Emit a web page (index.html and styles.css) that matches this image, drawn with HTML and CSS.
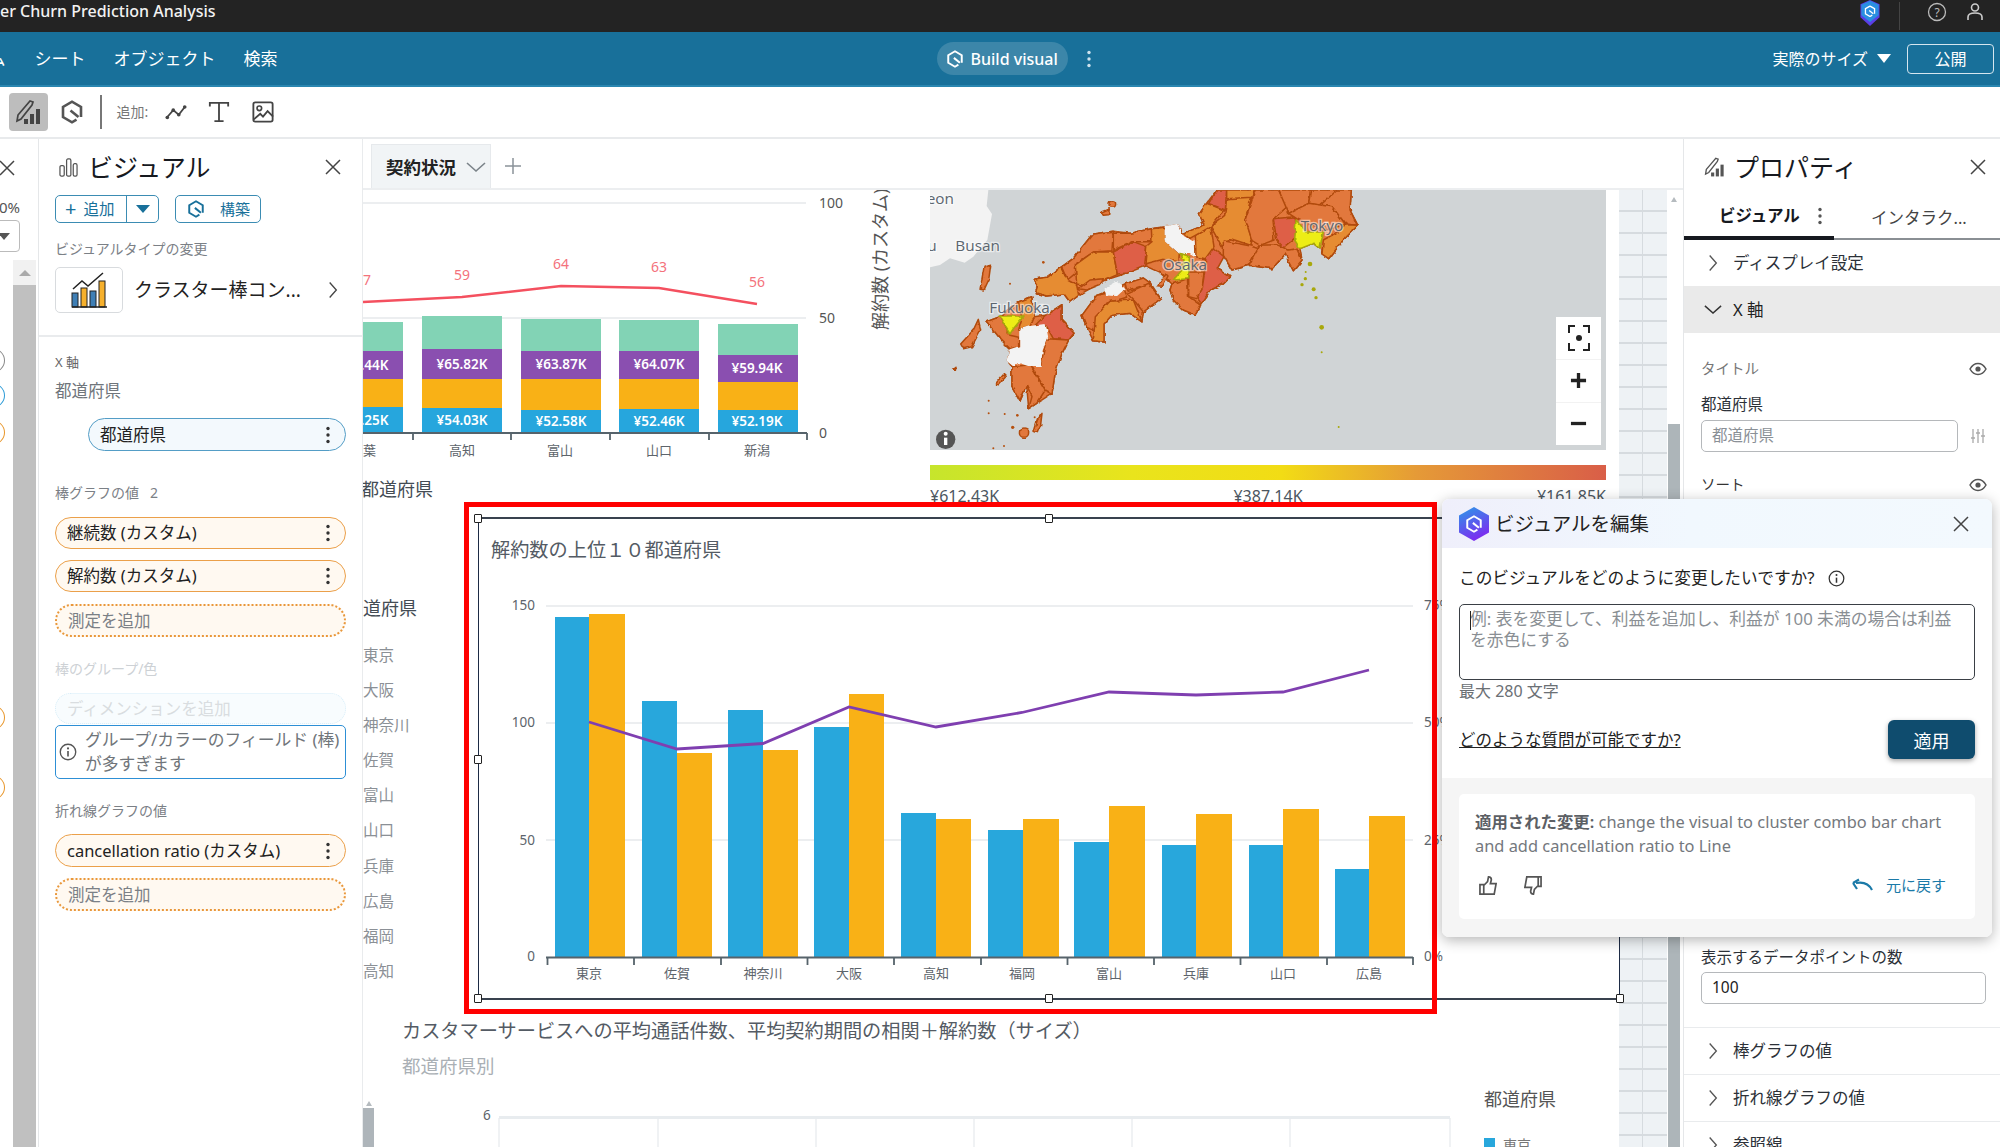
FILE: index.html
```html
<!DOCTYPE html>
<html lang="ja">
<head>
<meta charset="utf-8">
<title>Customer Churn Prediction Analysis</title>
<link rel="stylesheet" href="styles.css">
</head>
<body>
<svg class="defs" width="0" height="0" aria-hidden="true">
  <symbol id="q" viewBox="0 0 24 24"><path d="M16.5 19.6 12 22.3 3 17V7l9-5.3L21 7v10" fill="none" stroke="currentColor" stroke-width="2.6"/><path d="M10.5 10.5l8 6.5" fill="none" stroke="currentColor" stroke-width="2.6"/></symbol>
  <symbol id="x" viewBox="0 0 16 16"><path d="M1 1l14 14M15 1 1 15" fill="none" stroke="currentColor" stroke-width="1.5"/></symbol>
  <symbol id="chev-r" viewBox="0 0 12 20"><path d="M2 1l8 9-8 9" fill="none" stroke="currentColor" stroke-width="1.6"/></symbol>
  <symbol id="chev-d" viewBox="0 0 20 12"><path d="M1 2l9 8 9-8" fill="none" stroke="currentColor" stroke-width="1.6"/></symbol>
  <symbol id="dots" viewBox="0 0 4 18"><circle cx="2" cy="2.5" r="1.7"/><circle cx="2" cy="9" r="1.7"/><circle cx="2" cy="15.5" r="1.7"/></symbol>
  <symbol id="eye" viewBox="0 0 18 14"><path d="M1 7c2-3.6 5-5.5 8-5.5S15 3.400 17 7c-2 3.600-5 5.500-8 5.500S3 10.600 1 7z" fill="none" stroke="currentColor" stroke-width="1.5"/><circle cx="9" cy="7" r="2.600" fill="currentColor"/></symbol>
  <symbol id="pen" viewBox="0 0 28 28"><path d="M3 17 15 3l3 1-1 3L6 21l-4 2z" fill="none" stroke="currentColor" stroke-width="1.7"/><rect x="9" y="21" width="4" height="5" fill="currentColor"/><rect x="15" y="16" width="4" height="10" fill="currentColor"/><rect x="21" y="11" width="4" height="15" fill="currentColor"/></symbol>
  <symbol id="info" viewBox="0 0 20 20"><circle cx="10" cy="10" r="8.600" fill="none" stroke="currentColor" stroke-width="1.500"/><circle cx="10" cy="6" r="1.200" fill="currentColor"/><path d="M10 9v6" stroke="currentColor" stroke-width="1.800"/></symbol>
  <filter id="rough" x="-5%" y="-5%" width="110%" height="110%"><feTurbulence type="fractalNoise" baseFrequency="0.05" numOctaves="2" seed="4"/><feDisplacementMap in="SourceGraphic" scale="11" xChannelSelector="R" yChannelSelector="G"/></filter>
</svg>

<div class="app">
  <header class="topbar">
    <span class="doc-title">er Churn Prediction Analysis</span>
    <div class="top-right">
      <svg class="top-shield" viewBox="0 0 24 30"><path d="M12 0 23 5v15l-11 10L1 20V5z" fill="#5b3fe6"/><path d="M12 1 22 5.500v12l-10 8-10-8v-12z" fill="#2a8fe0"/><use href="#q" x="5" y="6" width="14" height="14" color="#fff"/></svg>
      <span class="top-sep"></span>
      <svg class="top-ico" viewBox="0 0 20 20"><circle cx="10" cy="10" r="8.500" fill="none" stroke="#bbb" stroke-width="1.300"/><text x="10" y="14.500" text-anchor="middle" class="qmark">?</text></svg>
      <svg class="top-ico user" viewBox="0 0 20 20"><circle cx="10" cy="5.500" r="3.500" fill="none" stroke="#ccc" stroke-width="1.600"/><path d="M3 18v-3c0-2 2-4 7-4s7 2 7 4v3" fill="none" stroke="#ccc" stroke-width="1.600"/></svg>
    </div>
  </header>

  <nav class="nav">
    <div class="nav-left"><span class="nav-clip">ホーム</span><span class="nav-first">シート</span><span>オブジェクト</span><span>検索</span></div>
    <div class="build"><svg class="ic18"><use href="#q"/></svg>Build visual</div>
    <svg class="nav-dots"><use href="#dots"/></svg>
    <div class="nav-right"><span>実際のサイズ</span><i class="nav-caret"></i><span class="publish">公開</span></div>
  </nav>

  <div class="toolbar">
    <div class="tool-active"><svg class="ic28"><use href="#pen"/></svg></div>
    <svg class="tool-hex"><use href="#q"/></svg>
    <span class="tool-sep"></span>
    <span class="tool-label">追加:</span>
    <svg class="tool-ic first" viewBox="0 0 24 24"><path d="M2 18l7-8 6 5 7-9" fill="none" stroke="#444" stroke-width="2"/><circle cx="2.500" cy="18" r="2" fill="#444"/><circle cx="9" cy="10" r="2" fill="#444"/><circle cx="15" cy="15" r="2" fill="#444"/><circle cx="21.500" cy="6.500" r="2" fill="#444"/></svg>
    <svg class="tool-ic second" viewBox="0 0 24 24"><path d="M2 6V2h20v4M12 2v20M7 22h10" fill="none" stroke="#444" stroke-width="2"/></svg>
    <svg class="tool-ic third" viewBox="0 0 24 24"><rect x="1.500" y="1.500" width="21" height="21" rx="2" fill="none" stroke="#444" stroke-width="2"/><circle cx="8" cy="8" r="2.500" fill="none" stroke="#444" stroke-width="1.800"/><path d="M2 20 9 14l3 3 5-6 6 6" fill="none" stroke="#444" stroke-width="2"/></svg>
  </div>

  <main class="main">
    <aside class="rail">
      <div class="rail-top">
        <svg class="rail-x"><use href="#x"/></svg>
        <div class="rail-pct">100%</div>
        <div class="rail-select"><i></i></div>
      </div>
      <div class="rail-body">
        <div class="rail-arcs">
          <span class="arc arc-gray"></span>
          <span class="arc arc-blue"></span>
          <span class="arc arc-orange"></span>
          <span class="arc arc-orange arc-far"></span>
          <span class="arc arc-orange arc-far2"></span>
        </div>
        <div class="rail-scroll"><div class="rail-arrow"><i></i></div><div class="rail-thumb"></div></div>
      </div>
    </aside>

    <section class="visual-panel">
      <div class="vp-top">
        <div class="panel-head">
          <svg class="head-ic" viewBox="0 0 20 20"><rect x="1" y="8" width="4.500" height="11" rx="1.500" fill="none" stroke="#555" stroke-width="1.300"/><rect x="8" y="1" width="4.500" height="18" rx="1.500" fill="none" stroke="#555" stroke-width="1.300"/><rect x="15" y="6" width="4" height="13" rx="1.500" fill="none" stroke="#555" stroke-width="1.300"/></svg>
          <h2 class="panel-title">ビジュアル</h2>
          <svg class="panel-close"><use href="#x"/></svg>
        </div>
        <div class="btn-row">
          <div class="btn-add"><span class="btn-add-main"><b class="plus">+</b>追加</span><span class="btn-add-drop"><i></i></span></div>
          <div class="btn-build"><svg class="ic18"><use href="#q"/></svg><span>構築</span></div>
        </div>
        <div class="field-label change-label">ビジュアルタイプの変更</div>
        <div class="type-row">
          <div class="type-box">
            <svg viewBox="0 0 36 36" class="type-ic">
              <rect x="1" y="21" width="6" height="14" fill="#3f7fb5" stroke="#222"/><rect x="10" y="16" width="6" height="19" fill="#f6b02c" stroke="#222"/><rect x="19" y="19" width="6" height="16" fill="#3f7fb5" stroke="#222"/><rect x="28" y="9" width="6" height="26" fill="#f6b02c" stroke="#222"/>
              <path d="M1 35h35M2 17l9-8 6 5 15-13" fill="none" stroke="#222" stroke-width="1.500"/>
            </svg>
          </div>
          <span class="type-name">クラスター棒コン...</span>
          <svg class="type-chev"><use href="#chev-r"/></svg>
        </div>
      </div>
      <div class="wells">
        <div class="field-label x-label">X 軸</div>
        <div class="well-name">都道府県</div>
        <div class="pill pill-blue"><span>都道府県</span><svg class="pill-dots"><use href="#dots"/></svg></div>

        <div class="field-label sect-1">棒グラフの値&nbsp;&nbsp;&nbsp;2</div>
        <div class="pill pill-orange p1"><span>継続数 (カスタム)</span><svg class="pill-dots"><use href="#dots"/></svg></div>
        <div class="pill pill-orange p2"><span>解約数 (カスタム)</span><svg class="pill-dots"><use href="#dots"/></svg></div>
        <div class="pill pill-add p3">測定を追加</div>

        <div class="field-label muted sect-2">棒のグループ/色</div>
        <div class="pill pill-dim">ディメンションを追加</div>
        <div class="warn"><svg class="warn-ic"><use href="#info"/></svg><span>グループ/カラーのフィールド (棒) が多すぎます</span></div>

        <div class="field-label sect-3">折れ線グラフの値</div>
        <div class="pill pill-orange p4"><span>cancellation ratio (カスタム)</span><svg class="pill-dots"><use href="#dots"/></svg></div>
        <div class="pill pill-add p5">測定を追加</div>
      </div>
    </section>

    <section class="canvas">
      <div class="tabs">
        <div class="tab">契約状況<svg class="tab-chev"><use href="#chev-d"/></svg></div>
        <svg class="tab-plus" viewBox="0 0 18 18"><path d="M9 1v16M1 9h16" stroke="#8a9299" stroke-width="1.500"/></svg>
      </div>

      <svg class="vis vis-top" viewBox="363 190 560 280">
        <g class="grid"><path d="M363 203H806M363 318H806"/></g>
        <g class="bars">
          <rect x="323" y="322" width="80" height="29" fill="#82d3b5"/><rect x="323" y="351" width="80" height="28" fill="#8a4fb0"/><rect x="323" y="379" width="80" height="28" fill="#f9b116"/><rect x="323" y="407" width="80" height="26" fill="#26a6dd"/>
          <rect x="422" y="316" width="80" height="33" fill="#82d3b5"/><rect x="422" y="349" width="80" height="30" fill="#8a4fb0"/><rect x="422" y="379" width="80" height="29" fill="#f9b116"/><rect x="422" y="408" width="80" height="25" fill="#26a6dd"/>
          <rect x="521" y="319" width="80" height="32" fill="#82d3b5"/><rect x="521" y="351" width="80" height="28" fill="#8a4fb0"/><rect x="521" y="379" width="80" height="31" fill="#f9b116"/><rect x="521" y="410" width="80" height="23" fill="#26a6dd"/>
          <rect x="619" y="320" width="80" height="31" fill="#82d3b5"/><rect x="619" y="351" width="80" height="28" fill="#8a4fb0"/><rect x="619" y="379" width="80" height="30" fill="#f9b116"/><rect x="619" y="409" width="80" height="24" fill="#26a6dd"/>
          <rect x="718" y="324" width="80" height="31" fill="#82d3b5"/><rect x="718" y="355" width="80" height="27" fill="#8a4fb0"/><rect x="718" y="382" width="80" height="28" fill="#f9b116"/><rect x="718" y="410" width="80" height="23" fill="#26a6dd"/>
        </g>
        <g class="bar-val">
          <text x="363" y="365">¥65.44K</text><text x="363" y="420">¥54.25K</text>
          <text x="462" y="364">¥65.82K</text><text x="462" y="420">¥54.03K</text>
          <text x="561" y="364">¥63.87K</text><text x="561" y="421">¥52.58K</text>
          <text x="659" y="364">¥64.07K</text><text x="659" y="421">¥52.46K</text>
          <text x="757" y="368">¥59.94K</text><text x="757" y="421">¥52.19K</text>
        </g>
        <polyline class="line-red" points="363,302 462,297 561,286 659,288 757,304"/>
        <g class="red-val"><text x="363" y="279">57</text><text x="462" y="274">59</text><text x="561" y="263">64</text><text x="659" y="266">63</text><text x="757" y="281">56</text></g>
        <path class="axis" d="M363 433H807M413 433v7M511 433v7M610 433v7M709 433v7M807 433v7"/>
        <g class="cat"><text x="363" y="450">千葉</text><text x="462" y="450">高知</text><text x="560" y="450">富山</text><text x="659" y="450">山口</text><text x="757" y="450">新潟</text></g>
        <g class="val-r"><text x="819" y="202">100</text><text x="819" y="317">50</text><text x="819" y="432">0</text></g>
        <text class="axis-title" transform="translate(887 330) rotate(-90)">解約数 (カスタム)</text>
      </svg>

      <div class="map-vis">
        <svg class="map" viewBox="0 0 2028 780">
          <rect width="2028" height="780" fill="#d0d4d6"/>
          <path class="korea" d="M0 0H175L170 48 186 72 172 150 130 200 104 218 60 205 30 225 0 232z"/>
          <g class="pref">
            <path class="o1" d="M310 268 352 262 392 232 430 205 488 132 550 124 600 130 664 116 706 110 740 104 760 130 822 106 808 72 830 40 860 0H1264L1260 60 1284 106 1240 150 1196 206 1176 192 1170 176 1150 160 1110 176 1116 210 1090 242 1076 216 1066 192 1026 236 956 226 906 240 880 196 862 236 902 260 880 282 842 300 812 342 794 374 760 360 730 330 720 300 726 282 690 248 640 225 590 250 520 272 446 316 420 336 402 312 350 318 316 308 322 290z"/>
            <path class="o1" d="M456 376 500 316 585 282 640 264 662 280 692 326 640 366 636 396 600 370 545 376 522 402 522 456 490 452 470 412z"/>
            <path class="o1" d="M168 396 210 380 265 336 305 320 312 380 346 376 396 344 396 390 432 430 416 450 396 490 376 546 366 610 320 640 296 656 290 586 270 634 246 592 246 530 232 512 240 476 214 450 190 420z"/>
            <path class="o2" d="M310 268 352 262 392 232 412 270 440 285 446 316 420 336 402 312 350 318 316 308 322 290z"/>
            <path class="o1" d="M395 232 430 205 488 132 550 124 546 182 490 186 440 220 436 250 412 270z"/>
            <path class="o2" d="M436 225 490 186 550 186 562 254 520 272 460 286 440 282z"/>
            <path class="o1" d="M550 130 600 130 665 116 666 155 610 155 550 182z"/>
            <path class="o3" d="M550 186 610 155 650 170 645 228 590 250 562 252z"/>
            <path class="o2" d="M664 116 706 112 706 150 748 190 746 215 700 208 645 222 650 168 666 155z"/>
            <path class="w" d="M706 110 740 104 760 140 796 160 796 200 780 190 750 190 706 150z"/>
            <path class="o1" d="M726 282 772 266 776 320 812 346 794 374 760 360 730 330 720 300z"/>
            <path class="o1" d="M776 246 822 246 816 300 800 326 776 320z"/>
            <path class="o3" d="M842 168 882 200 862 236 902 260 880 282 842 300 812 342 800 326 816 298 824 246 828 200z"/>
            <path class="o2" d="M796 136 842 110 852 170 826 206 798 200z"/>
            <path class="o2" d="M760 130 822 106 808 72 830 40 882 60 842 110 796 136 778 146z"/>
            <path class="o2" d="M890 22 965 20 946 84 966 150 962 166 902 146 876 170 842 110 884 76z"/>
            <path class="o3" d="M860 0H890L886 60 836 40z"/>
            <path class="o1" d="M880 152 962 168 986 176 956 226 906 240 880 196z"/>
            <path class="o1" d="M975 0H1046L1072 50 1026 90 1032 150 990 166 966 152 946 88z"/>
            <path class="o2" d="M890 0H975L965 22 890 26z"/>
            <path class="o1" d="M990 166 1040 164 1076 180 1100 176 1116 210 1090 242 1076 216 1066 192 1026 236 956 226z"/>
            <path class="o3" d="M1030 86 1096 80 1100 140 1060 172 1040 150z"/>
            <path class="o1" d="M1046 0H1142L1136 40 1076 70z"/>
            <path class="o1" d="M1142 0H1222L1206 30 1170 46 1136 40z"/>
            <path class="o1" d="M1222 0H1264L1260 60 1282 106 1246 102 1206 50 1170 46z"/>
            <path class="o1" d="M1076 70 1136 40 1206 50 1246 102 1180 122 1100 86z"/>
            <path class="o2" d="M1246 104 1284 106 1240 150 1196 206 1176 192 1180 150 1216 130z"/>
            <path class="o1" d="M585 282 640 264 662 280 590 302z"/>
            <path class="o1" d="M590 310 656 280 692 326 640 366 616 336z"/>
            <path class="o1" d="M456 376 500 316 580 300 590 322 530 340 510 380 490 420 470 412z"/>
            <path class="o2" d="M496 380 540 334 610 330 636 396 600 370 545 376 522 402 522 456 490 452z"/>
            <path class="o2" d="M265 336 305 320 312 380 300 410 266 420 276 386z"/>
            <path class="o3" d="M316 405 346 376 396 344 396 390 432 430 416 450 370 446 350 410z"/>
            <path class="o1" d="M350 446 416 450 396 490 376 546 366 610 346 600 300 520 332 524z"/>
            <path class="o1" d="M246 530 300 524 346 600 320 640 296 656 306 620 290 586 270 634 246 592z"/>
            <path class="o1" d="M168 396 210 380 240 436 266 442 266 470 240 476 214 450 190 420z"/>
            <path class="o1" d="M92 462 130 420 145 388 152 420 125 470 100 476z"/>
            <path class="o1" d="M150 298 162 232 182 226 176 270 162 300z"/>
            <path class="o1" d="M514 66 538 56 536 74 520 76z"/>
            <circle class="o1" cx="547" cy="42" r="10"/>
            <circle class="o1" cx="282" cy="728" r="14"/>
            <path class="o1" d="M312 724 322 690 336 670 332 704 322 728z"/>
            <path class="o1" d="M196 582 222 552 226 562 206 584z"/>
            <path class="o1" d="M68 540 78 532 76 542z"/>
            <path class="o1" d="M446 296 480 270 520 266 515 282 470 300z"/>
            <path class="o1" d="M682 290 708 252 714 258 696 292z"/>
            <path class="w" d="M526 296 560 278 582 296 560 316 530 314z"/>
            <path class="w" d="M270 420 300 410 345 404 352 440 336 480 330 526 295 526 265 516 250 526 232 512 240 480 270 470z"/>
            <path class="y" d="M208 378 282 378 250 416 240 432 226 410z"/>
            <path class="y" d="M750 190 778 200 776 266 730 270 756 240 762 210z"/>
            <path class="y" d="M1098 90 1130 126 1180 126 1170 176 1150 160 1110 176 1094 150z"/>
          </g>
          <g class="izu"><circle cx="1140" cy="222" r="7"/><circle cx="1127" cy="246" r="3"/><circle cx="1126" cy="266" r="5"/><circle cx="1116" cy="284" r="5"/><circle cx="1151" cy="298" r="6"/><circle cx="1158" cy="323" r="5"/><circle cx="1175" cy="412" r="7"/><circle cx="1175" cy="487" r="3"/><circle cx="1226" cy="711" r="3"/></g>
          <g class="dots-o"><circle cx="340" cy="217" r="4"/><circle cx="240" cy="281" r="3"/><circle cx="176" cy="632" r="3"/><circle cx="176" cy="670" r="3"/><circle cx="224" cy="672" r="3"/><circle cx="262" cy="676" r="4"/><circle cx="314" cy="682" r="3"/><circle cx="248" cy="712" r="5"/><circle cx="190" cy="775" r="3"/><circle cx="222" cy="768" r="3"/></g>
          <g class="mlabel">
            <text x="72" y="42" text-anchor="end">eon</text>
            <text x="20" y="182" text-anchor="end">u</text>
            <text x="76" y="182">Busan</text>
            <text x="178" y="368">Fukuoka</text>
            <text x="698" y="240">Osaka</text>
            <text x="1112" y="122">Tokyo</text>
          </g>
          <circle cx="47" cy="748" r="29" fill="#555"/><circle cx="47" cy="731" r="6" fill="#fff"/><rect x="42" y="743" width="10" height="22" fill="#fff"/>
        </svg>
        <div class="map-ctrl">
          <div class="ctrl"><svg viewBox="0 0 22 26" class="ctrl-fit"><path d="M1 8V1h6M15 1h6v7M1 18v7h6M15 25h6v-7" fill="none" stroke="#222" stroke-width="2"/><circle cx="11" cy="13" r="3" fill="#222"/></svg></div>
          <div class="ctrl"><svg viewBox="0 0 18 18" class="ctrl-pm"><path d="M9 1v16M1 9h16" stroke="#222" stroke-width="3.500"/></svg></div>
          <div class="ctrl"><svg viewBox="0 0 18 18" class="ctrl-pm"><path d="M1 9h16" stroke="#222" stroke-width="3.500"/></svg></div>
        </div>
        <div class="map-scale"></div>
        <div class="map-legend"><span>¥612.43K</span><span>¥387.14K</span><span>¥161.85K</span></div>
      </div>

      <div class="grid-strip"></div>
      <div class="canvas-scroll"><i class="scroll-up"></i><div class="scroll-thumb"></div></div>

      <div class="side-title clip1">都道府県</div>
      <div class="side-list">
        <div class="side-title list-head">道府県</div>
        <div class="side-items"><span>東京</span><span>大阪</span><span>神奈川</span><span>佐賀</span><span>富山</span><span>山口</span><span>兵庫</span><span>広島</span><span>福岡</span><span>高知</span></div>
      </div>

      <div class="selected">
        <div class="sel-title">解約数の上位１０都道府県</div>
        <svg class="sel-chart" viewBox="478 518 1142 482">
          <g class="grid"><path d="M546 606H1413M546 723H1413M546 840H1413"/></g>
          <g class="y-val"><text x="535" y="605">150</text><text x="535" y="722">100</text><text x="535" y="840">50</text><text x="535" y="956">0</text></g>
          <g class="val-r2"><text x="1424" y="605">75%</text><text x="1424" y="722">50%</text><text x="1424" y="840">25%</text><text x="1424" y="956">0%</text></g>
          <g fill="#28a7dc">
            <rect x="555" y="617" width="35" height="340"/><rect x="642" y="701" width="35" height="256"/><rect x="728" y="710" width="35" height="247"/><rect x="814" y="727" width="35" height="230"/><rect x="901" y="813" width="35" height="144"/><rect x="988" y="830" width="35" height="127"/><rect x="1074" y="842" width="35" height="115"/><rect x="1162" y="845" width="34" height="112"/><rect x="1249" y="845" width="34" height="112"/><rect x="1335" y="869" width="34" height="88"/>
          </g>
          <g fill="#f9b116">
            <rect x="589" y="614" width="36" height="343"/><rect x="677" y="753" width="35" height="204"/><rect x="763" y="750" width="35" height="207"/><rect x="849" y="694" width="35" height="263"/><rect x="936" y="819" width="35" height="138"/><rect x="1023" y="819" width="36" height="138"/><rect x="1109" y="806" width="36" height="151"/><rect x="1196" y="814" width="36" height="143"/><rect x="1283" y="809" width="36" height="148"/><rect x="1369" y="816" width="36" height="141"/>
          </g>
          <polyline class="line-purple" points="589,722 677,749 763,743.500 849,707 936,727 1022,712.500 1109,692 1196,695 1283,692 1369,670"/>
          <path class="axis" d="M546 957.500H1413M547.500 957v8M634 957v8M721 957v8M807.500 957v8M894 957v8M981 957v8M1067.500 957v8M1154 957v8M1240.500 957v8M1327 957v8M1413 957v8"/>
          <g class="cat"><text x="589" y="973">東京</text><text x="677" y="973">佐賀</text><text x="763" y="973">神奈川</text><text x="849" y="973">大阪</text><text x="936" y="973">高知</text><text x="1022" y="973">福岡</text><text x="1109" y="973">富山</text><text x="1196" y="973">兵庫</text><text x="1283" y="973">山口</text><text x="1369" y="973">広島</text></g>
        </svg>
        <i class="handle h-tl"></i><i class="handle h-tm"></i><i class="handle h-ml"></i><i class="handle h-bl"></i><i class="handle h-bm"></i><i class="handle h-br"></i>
      </div>

      <div class="vis-3">
        <div class="v3-title">カスタマーサービスへの平均通話件数、平均契約期間の相関＋解約数（サイズ）</div>
        <div class="v3-sub">都道府県別</div>
      </div>
      <div class="left-scroll"><i class="scroll-up"></i><div class="left-thumb"></div></div>
      <svg class="vis vis-bottom" viewBox="363 1090 1255 57">
        <text class="bottom-six" x="483" y="1115">6</text>
        <path class="bottom-top" d="M499 1117.500H1450"/>
        <path class="bottom-grid" d="M499 1118V1147M658 1118V1147M816 1118V1147M974 1118V1147M1132 1118V1147M1290 1118V1147M1450 1118V1147"/>
        <text class="bottom-legend" x="1484" y="1099">都道府県</text>
        <rect x="1484" y="1138" width="11" height="11" fill="#28a7dc"/>
        <text class="bottom-item" x="1503" y="1144">東京</text>
      </svg>
    </section>

    <aside class="props">
      <div class="props-head">
        <svg class="ic22 props-ic"><use href="#pen"/></svg>
        <h2 class="panel-title">プロパティ</h2>
        <svg class="panel-close props-close"><use href="#x"/></svg>
      </div>
      <div class="props-tabs">
        <div class="ptab ptab-on">ビジュアル<svg class="ptab-dots"><use href="#dots"/></svg></div>
        <div class="ptab">インタラク...</div>
      </div>
      <div class="row"><svg class="row-chev"><use href="#chev-r"/></svg>ディスプレイ設定</div>
      <div class="row row-open"><svg class="row-chev-d"><use href="#chev-d"/></svg>X 軸</div>
      <div class="prop-line first"><span>タイトル</span><svg class="eye"><use href="#eye"/></svg></div>
      <div class="prop-label">都道府県</div>
      <div class="prop-input-row">
        <div class="prop-input ghost">都道府県</div>
        <svg class="slider" viewBox="0 0 16 16"><path d="M3 1v14M8 1v14M13 1v14M1 10h4M6 5h4M11 8h4" stroke="#aaa" stroke-width="1.300"/></svg>
      </div>
      <div class="prop-line sort"><span>ソート</span><svg class="eye"><use href="#eye"/></svg></div>
      <div class="prop-label points">表示するデータポイントの数</div>
      <div class="prop-input wide">100</div>
      <div class="row row-b first-b"><svg class="row-chev"><use href="#chev-r"/></svg>棒グラフの値</div>
      <div class="row row-b"><svg class="row-chev"><use href="#chev-r"/></svg>折れ線グラフの値</div>
      <div class="row row-b"><svg class="row-chev"><use href="#chev-r"/></svg>参照線</div>
    </aside>

    <div class="red-frame"></div>

    <div class="modal">
      <div class="modal-head">
        <svg class="modal-logo" viewBox="0 0 30 34"><defs><linearGradient id="lg" x1="0" y1="0" x2="0.400" y2="1"><stop offset="0" stop-color="#2b9be8"/><stop offset="1" stop-color="#7a2ff0"/></linearGradient></defs><path d="M15 0 30 8.500v17L15 34 0 25.500v-17z" fill="url(#lg)"/><use href="#q" x="6" y="8" width="18" height="18" color="#fff"/></svg>
        <span class="modal-title">ビジュアルを編集</span>
        <svg class="modal-close"><use href="#x"/></svg>
      </div>
      <div class="modal-body">
        <div class="modal-q"><span>このビジュアルをどのように変更したいですか?</span><svg class="modal-info"><use href="#info"/></svg></div>
        <div class="modal-ta"><i class="caret"></i>例: 表を変更して、利益を追加し、利益が 100 未満の場合は利益を赤色にする</div>
        <div class="modal-max">最大 280 文字</div>
        <div class="modal-actions"><span class="modal-link">どのような質問が可能ですか?</span><span class="apply">適用</span></div>
      </div>
      <div class="modal-foot">
        <div class="applied">
          <p class="applied-text"><b>適用された変更:</b> change the visual to cluster combo bar chart and add cancellation ratio to Line</p>
          <div class="applied-actions">
            <svg class="thumb" viewBox="0 0 20 20"><path d="M1 9h4v10H1zM5 10l4-4 1-5c2 0 3 1 3 3l-1 4h6l-2 11H5" fill="none" stroke="#555" stroke-width="1.800"/></svg>
            <svg class="thumb down" viewBox="0 0 20 20"><path d="M19 11h-3V1h3zM16 10l-4 4-1 5c-2 0-3-1-3-3l1-4H2L4 1h12" fill="none" stroke="#555" stroke-width="1.800"/></svg>
            <span class="undo"><svg class="undo-ic" viewBox="0 0 22 14"><path d="M21 12C18 6 13 3.500 5 5" fill="none" stroke="#1b7aa8" stroke-width="2.200"/><path d="M2 5l6-3.500M2 5l4 6" fill="none" stroke="#1b7aa8" stroke-width="2.200"/></svg>元に戻す</span>
          </div>
        </div>
      </div>
    </div>
  </main>
</div>
</body>
</html>
```

FILE: styles.css
```css
* { box-sizing: border-box; }
html, body { margin: 0; padding: 0; background: #fff; }
body { font-family: "Noto Sans", "Noto Sans CJK JP", sans-serif; color: #16191f; overflow: hidden; }
.defs { position: absolute; }
.app { width: 2000px; height: 1147px; display: flex; flex-direction: column; overflow: hidden; }
svg { display: block; flex: none; }
h2 { margin: 0; font-weight: 400; }
p { margin: 0; }
i { display: block; font-style: normal; }

/* top bar */
.topbar { height: 32px; background: #232323; display: flex; align-items: center; justify-content: space-between; flex: none; }
.doc-title { color: #f2f2f2; font-size: 16px; font-weight: 500; line-height: 22px; margin-top: -11px; }
.top-right { display: flex; align-items: center; height: 100%; padding-right: 15px; }
.top-shield { width: 22px; height: 26px; margin-top: -6px; }
.top-sep { width: 1px; height: 28px; background: #444; margin: 0 27px 0 18px; }
.top-ico { width: 20px; height: 20px; margin-top: -8px; }
.top-ico.user { margin-left: 18px; }
.qmark { font-size: 12px; fill: #bbb; }

/* nav */
.nav { height: 55px; background: #18709a; flex: none; display: flex; align-items: center; color: #fff; border-bottom: 2px solid #2a86b0; }
.nav-left { display: flex; gap: 28px; font-size: 17px; line-height: 24px; }
.nav-clip { margin-left: -45px; }
.nav-first { margin-left: 1px; }
.build { margin-left: 659px; width: 131px; height: 33px; border-radius: 17px; background: #3c86a9; display: flex; align-items: center; gap: 7px; padding-left: 9px; font-size: 16px; font-weight: 500; line-height: 20px; }
.ic18 { width: 18px; height: 18px; }
.nav-dots { width: 4px; height: 18px; margin-left: 19px; fill: #cfe3ee; }
.nav-right { margin-left: auto; display: flex; align-items: center; padding-right: 6px; font-size: 16px; line-height: 22px; }
.nav-caret { width: 0; height: 0; border-left: 7px solid transparent; border-right: 7px solid transparent; border-top: 9px solid #fff; margin: 0 16px 0 9px; }
.publish { width: 87px; height: 30px; border: 1.500px solid #d5e6ef; border-radius: 4px; display: flex; align-items: center; justify-content: center; }

/* toolbar */
.toolbar { height: 52px; flex: none; display: flex; align-items: center; border-bottom: 2px solid #e8eaec; padding-left: 9px; color: #555; }
.tool-active { width: 39px; height: 38px; background: #bdbdbd; border-radius: 4px; display: flex; align-items: center; justify-content: center; color: #444; }
.ic28 { width: 28px; height: 28px; }
.tool-hex { width: 24px; height: 24px; margin-left: 12px; color: #555; }
.tool-sep { width: 1.500px; height: 34px; background: #777; margin-left: 16px; }
.tool-label { font-size: 14px; line-height: 20px; color: #777; margin-left: 15px; width: 34px; }
.tool-ic { width: 22px; height: 22px; }
.tool-ic.first { margin-left: 14px; }
.tool-ic.second { margin-left: 21px; }
.tool-ic.third { margin-left: 22px; }

/* main */
.main { flex: 1; min-height: 0; display: flex; position: relative; }

/* rail */
.rail { width: 39px; flex: none; border-right: 1px solid #e5e7e9; display: flex; flex-direction: column; overflow: hidden; }
.rail-top { height: 121px; flex: none; }
.rail-x { width: 16px; height: 16px; margin: 21px 0 0 -1px; color: #444; }
.rail-pct { width: 20px; height: 20px; margin-top: 21px; display: flex; justify-content: flex-end; overflow: hidden; font-size: 15px; line-height: 20px; color: #555; white-space: nowrap; }
.rail-select { width: 30px; height: 32px; margin: 3px 0 0 -10px; border: 1.500px solid #bbb; border-radius: 4px; display: flex; align-items: center; padding-left: 7px; }
.rail-select i { width: 0; height: 0; border-left: 6px solid transparent; border-right: 6px solid transparent; border-top: 7px solid #555; }
.rail-body { flex: 1; display: flex; min-height: 0; }
.rail-arcs { width: 13px; flex: none; display: flex; flex-direction: column; overflow: hidden; }
.arc { display: block; width: 26px; height: 25px; margin-left: -21px; border-radius: 50%; border: 1.500px solid #888; flex: none; }
.arc-gray { margin-top: 88px; }
.arc-blue { margin-top: 10px; border-color: #2a9ad6; }
.arc-orange { margin-top: 12px; border-color: #e8962a; }
.arc-far { margin-top: 260px; }
.arc-far2 { margin-top: 45px; }
.rail-scroll { width: 23px; flex: none; display: flex; flex-direction: column; }
.rail-arrow { height: 25px; background: #f1f1f1; display: flex; align-items: center; justify-content: center; }
.rail-arrow i { width: 0; height: 0; border-left: 6px solid transparent; border-right: 6px solid transparent; border-bottom: 6px solid #aaa; }
.rail-thumb { flex: 1; background: #c0c0c0; }

/* visual panel */
.visual-panel { width: 324px; flex: none; border-right: 1.500px solid #e9ebed; }
.vp-top { padding: 0 16px 22px; border-bottom: 2.500px solid #e9ebed; height: 198px; }
.panel-head { height: 56px; display: flex; align-items: center; }
.head-ic { width: 19px; height: 19px; margin-left: 4px; }
.panel-title { font-size: 25px; line-height: 32px; margin-left: 10px; color: #16191f; white-space: nowrap; }
.panel-close { width: 16px; height: 16px; margin-left: auto; margin-right: 5px; color: #444; }
.btn-row { display: flex; gap: 16px; height: 28px; color: #18709a; }
.btn-add { width: 104px; display: flex; border: 1.500px solid #3b8cb3; border-radius: 5px; }
.btn-add-main { width: 71px; display: flex; align-items: center; gap: 7px; font-size: 15.500px; line-height: 20px; border-right: 1.500px solid #3b8cb3; padding-left: 9px; white-space: nowrap; }
.plus { font-weight: 400; font-size: 20px; line-height: 20px; }
.btn-add-drop { flex: 1; display: flex; align-items: center; justify-content: center; }
.btn-add-drop i { width: 0; height: 0; border-left: 7px solid transparent; border-right: 7px solid transparent; border-top: 8px solid #18709a; }
.btn-build { width: 86px; border: 1.500px solid #3b8cb3; border-radius: 5px; display: flex; align-items: center; padding-left: 11px; gap: 15px; font-size: 15px; line-height: 20px; }
.field-label { font-size: 14px; line-height: 18px; color: #7b8086; white-space: nowrap; }
.change-label { margin-top: 17px; }
.type-row { margin-top: 9px; height: 46px; display: flex; align-items: center; }
.type-box { width: 68px; height: 46px; border: 1.500px solid #d8dbde; border-radius: 5px; display: flex; align-items: center; justify-content: center; }
.type-ic { width: 36px; height: 36px; }
.type-name { margin-left: 11px; font-size: 19px; line-height: 28px; white-space: nowrap; color: #222; width: 184px; }
.type-chev { width: 10px; height: 20px; color: #444; margin-left: 10px; }
.wells { padding: 0 16px; margin-top: -1px; }
.x-label { margin-top: 17px; color: #666; font-size: 13px; }
.well-name { margin-top: 9px; font-size: 16.500px; line-height: 22px; color: #6f757b; }
.pill { height: 33px; border-radius: 17px; display: flex; align-items: center; justify-content: space-between; padding: 0 15px 0 11px; font-size: 16.500px; line-height: 22px; white-space: nowrap; }
.pill-dots { width: 4px; height: 18px; fill: #333; }
.pill-blue { margin: 16px 0 0 33px; border: 1.500px solid #539dc6; background: #f3f9fd; color: #222; }
.pill-orange { border: 1.500px solid #eba04a; background: #fff9f1; color: #222; height: 32px; }
.pill-add { border: 2px dotted #e9973a; background: #fff9f1; color: #7b8086; font-size: 16.500px; }
.pill-dim { margin-top: 15px; height: 31px; border: 1.500px dotted #d8eef9; background: #f8fcfe; color: #d9dde0; font-size: 16.500px; }
.sect-1 { margin-top: 33px; }
.p1 { margin-top: 15px; }
.p2 { margin-top: 11px; }
.p3 { margin-top: 12px; }
.sect-2 { margin-top: 23px; }
.muted { color: #cdd1d5; }
.warn { margin-top: 1px; height: 54px; border: 1.500px solid #2d8fd5; border-radius: 5px; display: flex; align-items: center; padding-left: 3px; font-size: 16.800px; line-height: 24px; color: #70757a; }
.warn-ic { width: 18px; height: 18px; margin-right: 8px; color: #555; }
.warn span { width: 262px; }
.sect-3 { margin-top: 23px; }
.p4 { margin-top: 14px; height: 33px; }
.p5 { margin-top: 11px; }

/* canvas */
.canvas { flex: 1; min-width: 0; position: relative; overflow: hidden; }
.tabs { height: 51px; border-bottom: 2px solid #eceef0; display: flex; align-items: flex-end; padding-left: 8px; }
.tab { width: 120px; height: 44px; background: #f1f4f6; border: 1.500px solid #e6e9ec; border-bottom: 0; display: flex; align-items: center; padding-left: 14px; font-size: 17.500px; font-weight: 700; line-height: 24px; color: #222; }
.tab-chev { width: 20px; height: 12px; margin-left: 10px; color: #7b8389; }
.tab-plus { width: 18px; height: 18px; margin: 0 0 13px 13px; }
.vis { position: absolute; left: 0; }
.vis-top { top: 51px; width: 560px; height: 280px; }
.grid path { stroke: #eceef0; stroke-width: 2; fill: none; }
.bar-val text { fill: #fff; font-size: 13.500px; font-weight: 600; text-anchor: middle; dominant-baseline: central; }
.line-red { fill: none; stroke: #f4505f; stroke-width: 2.500; }
.red-val text { fill: #f4727c; font-size: 14px; text-anchor: middle; dominant-baseline: central; }
.axis { fill: none; stroke: #56636b; stroke-width: 1.800; }
.cat text { fill: #5d646b; font-size: 13px; text-anchor: middle; dominant-baseline: central; }
.val-r text { fill: #555; font-size: 14px; dominant-baseline: central; }
.axis-title { fill: #555; font-size: 18px; }

.map-vis { position: absolute; left: 567px; top: 51px; width: 676px; }
.map { width: 676px; height: 260px; }
.korea { fill: #f3f3f3; }
.pref { filter: url(#rough); }
.pref path, .pref circle { stroke: #b04a0c; stroke-width: 4.500; stroke-linejoin: round; }
.o1 { fill: #e2783c; }
.o2 { fill: #e68c33; }
.o3 { fill: #de5f47; }
.pref .w { fill: #f3f3f3; stroke: #f3f3f3; }
.pref .y { fill: #eded14; stroke: #a6a70c; }
.izu circle { fill: #a8a80c; }
.dots-o circle { fill: #b5500f; }
.mlabel text { font-family: "Open Sans", "Noto Sans", sans-serif; font-size: 46px; fill: #5c6670; stroke: rgba(255,255,255,.55); stroke-width: 8px; paint-order: stroke; }
.map-ctrl { position: absolute; left: 626px; top: 127px; width: 45px; background: #f2f2f2; display: flex; flex-direction: column; gap: 1.500px; }
.ctrl { height: 41.500px; background: #fff; display: flex; align-items: center; justify-content: center; }
.ctrl-fit { width: 22px; height: 26px; }
.ctrl-pm { width: 17px; height: 17px; }
.map-scale { margin-top: 15px; height: 15px; background: linear-gradient(90deg, #c6e52c 0%, #e9e41c 30%, #f2dc15 52%, #e59a37 72%, #d95e48 100%); }
.map-legend { display: flex; justify-content: space-between; margin-top: 6px; font-size: 16px; line-height: 20px; color: #4c5660; }

.grid-strip { position: absolute; left: 1256px; top: 51px; bottom: 0; width: 48px;
  background-color: #eef2f5;
  background-image: repeating-linear-gradient(180deg, transparent 0 20px, #d6dbdf 20px 22px), linear-gradient(90deg, transparent 23px, #d6dbdf 23px, #d6dbdf 24px, transparent 24px); }
.canvas-scroll { position: absolute; left: 1305px; top: 51px; bottom: 0; width: 12px; display: flex; flex-direction: column; align-items: center; }
.scroll-up { width: 0; height: 0; border-left: 3.500px solid transparent; border-right: 3.500px solid transparent; border-bottom: 5px solid #b5bbbf; margin-top: 7px; flex: none; }
.scroll-thumb { width: 12px; flex: 1; margin-top: 222px; background: #adb5b9; }

.side-title { font-size: 18px; line-height: 24px; color: #444c54; white-space: nowrap; }
.clip1 { position: absolute; left: -2px; top: 338px; }
.side-list { position: absolute; left: 0; top: 457px; }
.side-items { margin-top: 18px; display: flex; flex-direction: column; font-size: 15.500px; line-height: 35.100px; color: #8b9096; white-space: nowrap; }

.selected { position: absolute; left: 115px; top: 378px; width: 1142px; height: 483px; border: 1px solid #1d2b45; border-top: 2px solid #39424f; border-bottom: 2px solid #39424f; background: #fff; }
.sel-chart { position: absolute; left: -1px; top: -1px; width: 1142px; height: 482px; }
.sel-title { position: absolute; left: 12px; top: 18px; font-size: 19.200px; line-height: 26px; color: #545b64; white-space: nowrap; z-index: 1; }
.y-val text { fill: #5d646b; font-size: 13.500px; text-anchor: end; dominant-baseline: central; }
.val-r2 text { fill: #5d646b; font-size: 13.500px; dominant-baseline: central; }
.line-purple { fill: none; stroke: #7f3fb0; stroke-width: 2.800; }
.handle { position: absolute; width: 8px; height: 9px; background: #fff; border: 1.500px solid #222; border-radius: 1px; z-index: 2; }
.h-tl { left: -5px; top: -5px; }
.h-tm { left: 566px; top: -5px; }
.h-ml { left: -5px; top: 236px; }
.h-bl { left: -5px; bottom: -5px; }
.h-bm { left: 566px; bottom: -5px; }
.h-br { right: -5px; bottom: -5px; }

.vis-3 { position: absolute; left: 39px; top: 879px; }
.v3-title { font-size: 19.200px; line-height: 26px; color: #545b64; white-space: nowrap; }
.v3-sub { margin-top: 9px; font-size: 18.500px; line-height: 26px; color: #aab0b5; }
.left-scroll { position: absolute; left: 0; top: 955px; bottom: 0; width: 11px; display: flex; flex-direction: column; align-items: center; }
.left-thumb { width: 11px; flex: 1; margin-top: 2px; background: #aeb5ba; }
.vis-bottom { top: 951px; width: 1255px; height: 57px; }
.bottom-six { fill: #5d646b; font-size: 13.500px; dominant-baseline: central; }
.bottom-top { stroke: #e8ecef; stroke-width: 3; }
.bottom-grid { stroke: #e8ecef; stroke-width: 1.300; }
.bottom-legend { fill: #555; font-size: 18px; dominant-baseline: central; }
.bottom-item { fill: #777; font-size: 14px; dominant-baseline: central; }

/* properties */
.props { width: 317px; flex: none; border-left: 1px solid #e5e7e9; overflow: hidden; }
.props-head { height: 56px; display: flex; align-items: center; }
.ic22 { width: 22px; height: 24px; }
.props-ic { margin-left: 20px; color: #555; }
.props .panel-title { margin-left: 8px; }
.props-close { margin-right: 14px; }
.props-tabs { height: 45px; display: flex; border-bottom: 2px solid #8a8f94; margin-bottom: 0; }
.ptab { height: 45px; display: flex; align-items: center; font-size: 16.500px; line-height: 24px; color: #444; white-space: nowrap; }
.ptab-on { width: 150px; padding-left: 35px; font-weight: 700; color: #16191f; border-bottom: 4px solid #16191f; }
.ptab-dots { width: 4px; height: 18px; margin-left: 18px; fill: #555; }
.ptab:last-child { margin-left: 37px; }
.row { height: 46px; display: flex; align-items: center; font-size: 16.500px; line-height: 24px; color: #2c3138; position: relative; padding-left: 49px; }
.row-open { height: 47px; background: #eaeaea; color: #222; }
.row-chev, .row-chev-d { position: absolute; }
.row-chev { left: 24px; width: 10px; height: 18px; color: #555; }
.row-chev-d { left: 20px; width: 18px; height: 11px; color: #333; }
.prop-line { display: flex; align-items: center; justify-content: space-between; height: 22px; padding: 0 13px 0 17px; font-size: 14.500px; color: #777; }
.prop-line span { margin-top: -3px; }
.prop-line.first { margin-top: 25px; }
.prop-line.sort { margin-top: 22px; color: #333; }
.eye { width: 18px; height: 14px; color: #555; }
.prop-label { margin-top: 15px; padding-left: 17px; height: 20px; font-size: 15.500px; line-height: 19px; color: #2c3138; white-space: nowrap; }
.prop-input-row { display: flex; align-items: center; margin-top: 5px; padding-left: 17px; }
.prop-input { height: 32px; border: 1.500px solid #b5b8bb; border-radius: 5px; font-size: 15.500px; line-height: 29px; padding-left: 10px; color: #222; }
.prop-input.ghost { width: 257px; color: #8a9096; }
.slider { width: 16px; height: 16px; margin-left: 12px; }
.prop-label.points { margin-top: 452px; }
.prop-input.wide { margin: 4px 0 0 17px; width: 285px; }
.row-b { height: 47px; border-top: 1.500px solid #e9ebed; }
.first-b { margin-top: 23px; }

/* red frame overlay */
.red-frame { position: absolute; left: 464px; top: 363px; width: 973px; height: 512px; border: 5px solid #ff0000; pointer-events: none; }

/* modal */
.modal { position: absolute; left: 1442px; top: 360px; width: 550px; height: 438px; background: #fff; border-radius: 7px; overflow: hidden; box-shadow: 0 3px 14px rgba(0,0,0,.3); display: flex; flex-direction: column; }
.modal-head { height: 49px; flex: none; background: linear-gradient(90deg, #efeffb 0%, #f1f8fe 45%, #f3f9fe 100%); display: flex; align-items: center; padding-left: 17px; }
.modal-logo { width: 30px; height: 34px; }
.modal-title { margin-left: 6px; font-size: 19.500px; line-height: 26px; color: #222; white-space: nowrap; }
.modal-close { width: 16px; height: 16px; margin-left: auto; margin-right: 23px; color: #444; }
.modal-body { flex: 1; padding: 0 17px; }
.modal-q { margin-top: 18px; height: 24px; display: flex; align-items: center; font-size: 16.700px; line-height: 24px; color: #222; white-space: nowrap; }
.modal-info { width: 17px; height: 17px; margin-left: 13px; color: #333; }
.modal-ta { position: relative; margin-top: 14px; height: 76px; border: 1.500px solid #3a3f45; border-radius: 5px; padding: 3px 10px; font-size: 16.800px; line-height: 21px; color: #8a8f94; }
.caret { position: absolute; left: 10px; top: 6px; width: 1px; height: 19px; background: #222; }
.modal-max { margin-top: 1px; font-size: 16px; line-height: 20px; color: #6b7075; }
.modal-actions { margin-top: 19px; height: 39px; display: flex; align-items: center; justify-content: space-between; }
.modal-link { font-size: 16.500px; line-height: 22px; text-decoration: underline; color: #222; white-space: nowrap; }
.apply { width: 87px; height: 39px; background: #0f4c6e; border-radius: 6px; color: #fff; font-size: 18px; display: flex; align-items: center; justify-content: center; box-shadow: 0 2px 5px rgba(0,0,0,.35); }
.modal-foot { height: 159px; flex: none; background: #f5f5f5; padding: 16px 17px 0; }
.applied { height: 125px; background: #fff; border-radius: 5px; padding: 16px 16px 0; }
.applied-text { font-size: 16.400px; line-height: 24px; color: #74787d; width: 484px; }
.applied-text b { color: #5c6065; font-weight: 600; }
.applied-actions { margin-top: 15px; display: flex; align-items: center; height: 24px; }
.thumb { width: 19px; height: 19px; margin-left: 4px; }
.thumb.down { margin-left: 25px; }
.undo { margin-left: auto; margin-right: 13px; display: flex; align-items: center; gap: 13px; font-size: 15px; line-height: 22px; color: #1b7aa8; white-space: nowrap; }
.undo-ic { width: 22px; height: 14px; }
```
